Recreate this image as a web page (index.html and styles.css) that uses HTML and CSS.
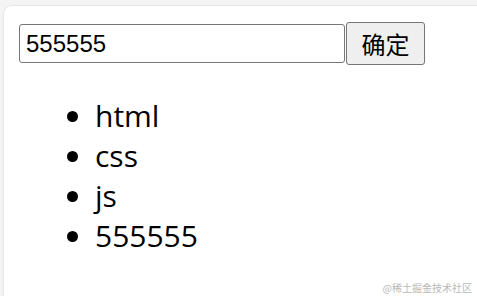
FILE: index.html
```html
<!DOCTYPE html>
<html>

<head>
    <title>Todo</title>
    <meta charset="utf-8">
    <meta name="viewport" content="width=device-width, initial-scale=1.0">
    <link rel="stylesheet" href="styles.css">
</head>

<body>

    <section class="kort">
        <div class="form">
            <input type="text" class="felt" value="555555">
            <button class="knap">确定</button>
        </div>

        <ul class="liste">
            <li>html</li>
            <li>css</li>
            <li>js</li>
            <li>555555</li>
        </ul>
    </section>

    <p class="vandmaerke">@稀土掘金技术社区</p>

</body>

</html>
```

FILE: styles.css
```css
body {
    margin: 0;
    background: #f4f4f4;
    overflow: hidden;
}

.kort {
    box-sizing: border-box;
    height: calc(100vh - 5px);
    margin: 5px -12px 0 3px;
    padding: 16px 15px;
    background: white;
    border: 1px solid #e6e6e6;
    border-bottom: none;
    border-radius: 9px 9px 0 0;
}

.form {
    display: flex;
    align-items: center;
}

.felt {
    width: 326px;
    height: 39px;
    box-sizing: border-box;
    margin: 0;
    padding: 0 6px;
    font-family: "Liberation Sans", Arial, sans-serif;
    font-size: 24px;
    color: black;
    border: 1px solid #767676;
    border-radius: 3px;
}

.knap {
    width: 79px;
    height: 43px;
    margin: 0 0 0 1px;
    padding: 0;
    font-family: "Noto Sans CJK SC", sans-serif;
    font-size: 24px;
    color: black;
    background: #efefef;
    border: 1px solid #767676;
    border-radius: 3px;
}

.liste {
    margin: 31px 0 0;
    padding-left: 76px;
    font-family: "Open Sans", sans-serif;
    font-size: 30px;
    line-height: 40px;
}

.vandmaerke {
    position: absolute;
    right: 5px;
    bottom: 1px;
    margin: 0;
    font-family: "Noto Sans CJK SC", sans-serif;
    font-size: 10px;
    color: #b8b8b8;
}
```
